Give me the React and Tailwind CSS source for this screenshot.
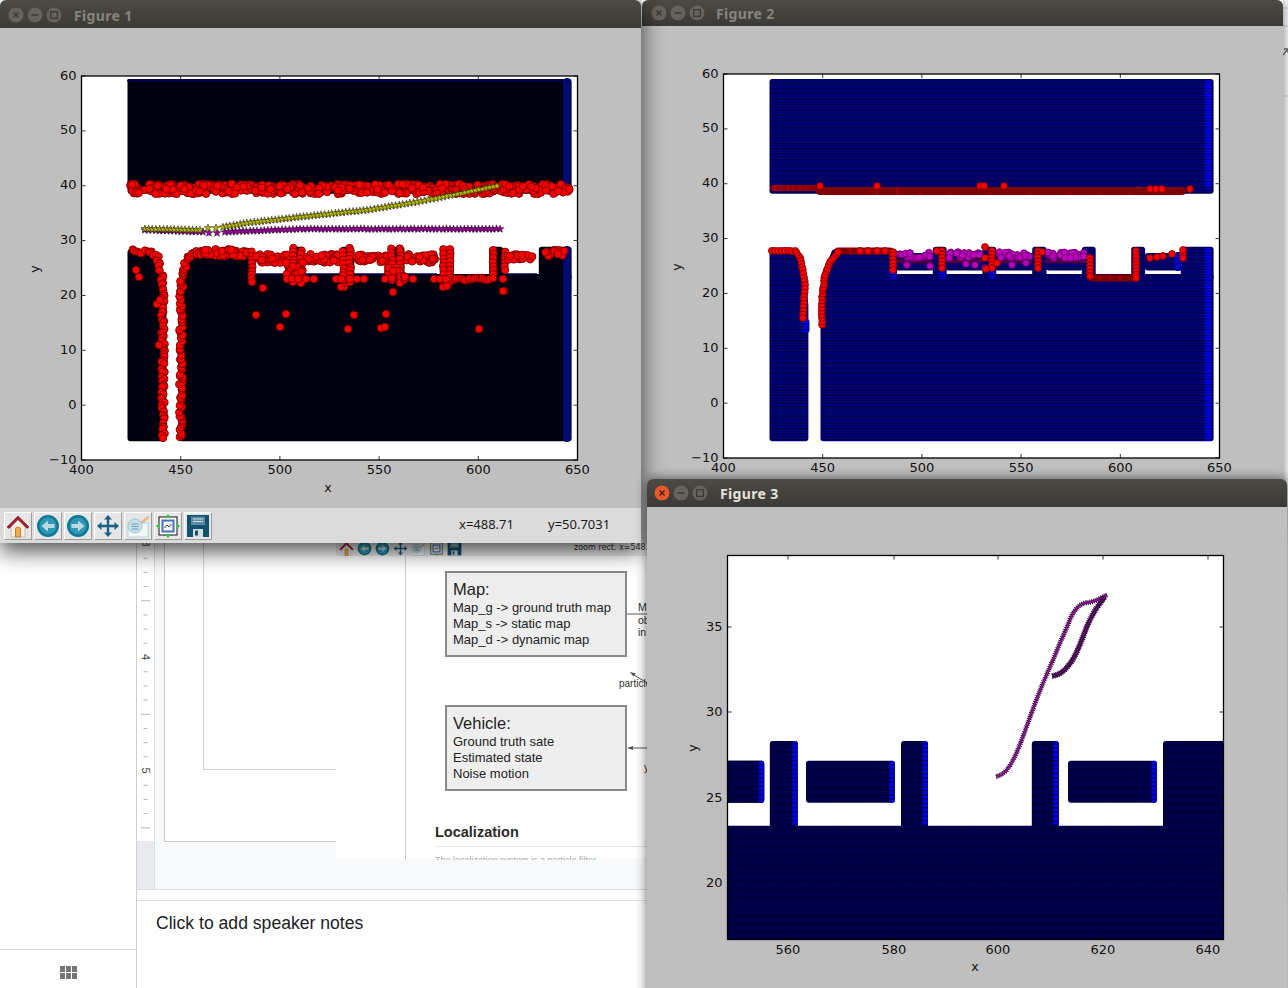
import React from "react";

function makeRng(seed) {
  let a = seed;
  return () => {
    a |= 0; a = (a + 0x6d2b79f5) | 0;
    let t = Math.imul(a ^ (a >>> 15), 1 | a);
    t = (t + Math.imul(t ^ (t >>> 7), 61 | t)) ^ t;
    return ((t ^ (t >>> 14)) >>> 0) / 4294967296;
  };
}

function band(r, x0, x1, y0, y1, n) {
  const o = [];
  for (let i = 0; i < n; i++) o.push([x0 + (x1 - x0) * r(), y0 + (y1 - y0) * r()]);
  return o;
}

function track(r, pts, step, jitter) {
  const o = [];
  for (let i = 0; i < pts.length - 1; i++) {
    const [ax, ay] = pts[i];
    const [bx, by] = pts[i + 1];
    const len = Math.hypot(bx - ax, by - ay);
    const n = Math.max(1, Math.round(len / step));
    for (let k = 0; k < n; k++) {
      o.push([ax + ((bx - ax) * k) / n + (r() - 0.5) * 2 * jitter, ay + ((by - ay) * k) / n + (r() - 0.5) * 2 * jitter]);
    }
  }
  o.push(pts[pts.length - 1]);
  return o;
}

function starPts(cx, cy, R) {
  const p = [];
  for (let i = 0; i < 10; i++) {
    const rad = i % 2 === 0 ? R : R * 0.42;
    const a = -Math.PI / 2 + (i * Math.PI) / 5;
    p.push(`${(cx + rad * Math.cos(a)).toFixed(1)},${(cy + rad * Math.sin(a)).toFixed(1)}`);
  }
  return p.join(" ");
}

function range(a, b, s) {
  const o = [];
  for (let v = a; s > 0 ? v <= b + 1e-6 : v >= b - 1e-6; v += s) o.push(v);
  return o;
}

const poly = (pts) => "M" + pts.map((p) => p[0].toFixed(1) + " " + p[1].toFixed(1)).join("L") + "Z";

function smooth(t) {
  let d = `M${t[0][0]} ${t[0][1]}`;
  for (let i = 1; i < t.length - 1; i++) {
    const mx = (t[i][0] + t[i + 1][0]) / 2;
    const my = (t[i][1] + t[i + 1][1]) / 2;
    d += `Q${t[i][0]} ${t[i][1]} ${mx} ${my}`;
  }
  const l = t[t.length - 1];
  return d + `L${l[0]} ${l[1]}`;
}

function mapShapes(X, Y, withBoxes, maxX) {
  const R = (x0, x1, y0, y1) => poly([[X(x0), Y(y0)], [X(x1), Y(y0)], [X(x1), Y(y1)], [X(x0), Y(y1)]]);
  const conv = (a) => poly(a.map(([x, y]) => [X(x), Y(y)]));
  const s = [
    R(424.7, 645.5, 38.9, 58.7),
    conv([[424.7, -6.2], [424.7, 27.7], [434, 27.7], [437.5, 26], [440, 23], [441.3, 18], [441.3, -6.2]]),
    conv([[450.4, -6.2], [450.4, 18], [451.5, 22], [453, 25], [456, 27.7], [486, 27.7], [486, 23.2], [645.5, 23.2], [645.5, -6.2]]),
    R(507, 511, 23.2, 28.16),
    R(532, 536, 23.2, 28.16),
    R(557.1, 561.3, 23.2, 28.16),
    R(582.1, 586.1, 23.2, 28.16),
    R(607, 611, 23.2, 28.16),
    R(632, maxX, 23.2, 28.16),
  ];
  if (withBoxes) {
    s.push(R(488, 504.5, 24.9, 27), R(513.5, 530, 24.9, 27), R(538, 554.9, 24.9, 27), R(564, 579.8, 24.9, 27), R(613.9, 629.7, 24.9, 27));
  }
  return s;
}

const X1 = (x) => 81.5 + (x - 400) * 1.984;
const Y12 = (y) => 75 + (60 - y) * 5.486;
const X2 = (x) => 723.5 + (x - 400) * 1.984;
const X3 = (x) => 788 + (x - 560) * 5.25;
const Y3 = (y) => 798 + (25 - y) * 17.1;

const r1 = makeRng(11);
const redPlot1 = [
  ...band(r1, 130, 570, 184, 194, 560),
  ...track(r1, [[131, 251], [150, 252], [157, 258], [161, 272], [163, 300], [163, 438]], 2.6, 1.8),
  ...track(r1, [[181, 438], [181, 300], [182, 272], [188, 256], [198, 252], [248, 252]], 2.6, 1.8),
  ...band(r1, 195, 248, 249, 257, 50),
  ...track(r1, [[252, 252], [252, 282]], 4, 0.5),
  ...band(r1, 256, 292, 254, 263, 36),
  ...band(r1, 306, 340, 254, 263, 38),
  ...band(r1, 355, 388, 254, 263, 36),
  ...band(r1, 405, 437, 254, 263, 36),
  ...track(r1, [[293, 248], [293, 282]], 4, 0.8),
  ...track(r1, [[301, 250], [301, 283]], 4, 0.8),
  ...band(r1, 286, 304, 262, 276, 14),
  ...track(r1, [[343, 252], [343, 280]], 4, 0.8),
  ...track(r1, [[350, 248], [350, 282]], 4, 0.8),
  ...track(r1, [[392, 248], [392, 280]], 4, 0.8),
  ...track(r1, [[400, 248], [400, 283]], 4, 0.8),
  ...band(r1, 386, 406, 265, 280, 12),
  ...track(r1, [[444, 250], [444, 279]], 4, 1),
  ...track(r1, [[450, 249], [450, 282]], 4, 0.5),
  ...track(r1, [[452, 279], [490, 279]], 2.2, 1.2),
  ...track(r1, [[493, 250], [493, 278]], 4, 0.5),
  ...track(r1, [[505, 252], [505, 270]], 4, 0.5),
  ...band(r1, 505, 536, 254, 260, 30),
  ...band(r1, 540, 565, 249, 256, 14),
  [287, 279], [292, 279], [298, 279], [306, 279], [314, 279], [336, 279], [341, 279], [350, 279], [357, 279], [364, 279], [385, 279], [392, 278], [413, 279], [434, 279], [440, 279], [446, 279],
  [503, 279], [136, 270], [139, 277], [157, 304], [159, 345], [160, 300],
  [256, 315], [286, 314], [280, 327], [263, 288], [348, 329], [354, 315], [381, 328], [385, 327], [386, 314], [479, 329], [393, 292], [504, 291], [344, 287], [341, 287], [443, 287], [447, 286], [503, 291],
];

const starsYellow = [
  ...track(r1, [[145, 229], [200, 230]], 3.6, 0.2),
  [208, 228], [216, 228],
  ...track(r1, [[223, 227], [247, 223], [300, 217], [367, 210], [417, 202], [447, 196], [497, 186]], 3.6, 0.2),
];
const starsPurple = [
  ...track(r1, [[145, 230], [203, 232]], 3.6, 0.2),
  [209, 233], [217, 233],
  ...track(r1, [[225, 232], [250, 231], [300, 229], [500, 229]], 3.6, 0.2),
];

const r2 = makeRng(29);
const brightPlot2 = [
  [820, 186], [877, 186], [980, 186], [984, 186], [1004, 186], [1190, 189], [1150, 189], [1156, 189], [1162, 189],
  ...track(r2, [[772, 251], [795, 251], [800, 258], [803, 270], [805, 285], [804, 300], [803, 318]], 3.4, 0.3),
  ...track(r2, [[822, 325], [822, 297], [825, 275], [830, 262], [838, 252]], 3.4, 0.4),
  ...track(r2, [[893, 252], [893, 270]], 3.5, 0.1),
  [860, 251], [868, 251], [877, 251], [885, 251],
  ...track(r2, [[942, 251], [942, 268]], 3.5, 0.1), [937, 251],
  ...track(r2, [[992, 251], [992, 268]], 3.5, 0.1), [985, 247], [986, 269], [985, 258], [997, 263],
  ...track(r2, [[1038, 251], [1038, 268]], 3.5, 0.1), [1042, 252],
  ...track(r2, [[1090, 258], [1090, 276]], 3.5, 0.1),
  ...track(r2, [[1136, 251], [1136, 278]], 3.5, 0.1),
  [1150, 258], [1157, 257], [1163, 256], [1172, 254], [1183, 254], [1183, 258], [1183, 250],
];
const magentaPlot2 = [
  ...band(r2, 899, 930, 252, 258, 22),
  ...band(r2, 948, 980, 252, 258, 24),
  ...band(r2, 999, 1030, 252, 258, 24),
  ...band(r2, 1047, 1084, 252, 258, 26),
  [907, 265], [930, 266], [966, 264], [975, 265], [1012, 265], [1026, 263], [985, 268],
];

const traj = [[996, 776.5], [1003, 775], [1012, 763], [1020, 745], [1030, 717], [1040, 690], [1050, 667], [1060, 643], [1067, 627], [1073, 612], [1082, 603], [1093, 602], [1107, 595]];
const traj2 = [[1052, 676], [1060, 675], [1072, 662], [1080, 645], [1088, 623], [1097, 607], [1105, 597]];

function Red({ pts, r = 3.4 }) {
  return (
    <g fill="#ff0000" stroke="#7a0000" strokeWidth="0.9">
      {pts.map((p, i) => (
        <circle key={i} cx={p[0]} cy={p[1]} r={r} />
      ))}
    </g>
  );
}

function Figure({ ox, oy, ax, xticks, yticks, xl, yl, clip, children }) {
  const id = `clip${ox}`;
  return (
    <svg className="block w-full h-full font-['DejaVu_Sans',sans-serif]">
      <g transform={`translate(${-ox} ${-oy})`}>
        <defs>
          <clipPath id={id}>
            <rect x={ax.x} y={ax.y} width={ax.w} height={ax.h} />
          </clipPath>
        </defs>
        <rect x={ax.x} y={ax.y} width={ax.w} height={ax.h} fill="#fff" />
        <g clipPath={clip ? `url(#${id})` : undefined}>{children}</g>
        <rect x={ax.x} y={ax.y} width={ax.w} height={ax.h} fill="none" stroke="#000" strokeWidth="1.3" />
        {xticks.map(([p, l]) => (
          <g key={l}>
            <path d={`M${p} ${ax.y}v4M${p} ${ax.y + ax.h}v-4`} stroke="#000" strokeWidth="0.8" />
            <text x={p} y={ax.y + ax.h + 14} fontSize="13" textAnchor="middle" fill="#111">{l}</text>
          </g>
        ))}
        {yticks.map(([p, l]) => (
          <g key={l}>
            <path d={`M${ax.x} ${p}h4M${ax.x + ax.w} ${p}h-4`} stroke="#000" strokeWidth="0.8" />
            <text x={ax.x - 5} y={p + 3.5} fontSize="13" textAnchor="end" fill="#111">{l}</text>
          </g>
        ))}
        <text x={xl[0]} y={xl[1]} fontSize="12.5" textAnchor="middle" fill="#111">x</text>
        <text x={yl[0]} y={yl[1]} fontSize="12.5" textAnchor="middle" fill="#111" transform={`rotate(-90 ${yl[0]} ${yl[1]})`}>y</text>
      </g>
    </svg>
  );
}

function Lights({ active }) {
  const c = "#64625c";
  const g = "#3a3934";
  return (
    <>
      <svg width="16" height="16" viewBox="0 0 16 16" className="shrink-0">
        <circle cx="8" cy="8" r="7.5" fill={active ? "#e9582a" : c} />
        <path d="M5.5 5.5l5 5M10.5 5.5l-5 5" stroke={active ? "#4a1a08" : g} strokeWidth="1.3" />
      </svg>
      <svg width="16" height="16" viewBox="0 0 16 16" className="shrink-0 ml-[3px]">
        <circle cx="8" cy="8" r="7.5" fill={c} />
        <path d="M4.5 8h7" stroke={g} strokeWidth="1.5" />
      </svg>
      <svg width="16" height="16" viewBox="0 0 16 16" className="shrink-0 ml-[3px]">
        <circle cx="8" cy="8" r="7.5" fill={c} />
        <rect x="4.7" y="4.7" width="6.6" height="6.6" fill="none" stroke={g} strokeWidth="1.3" />
      </svg>
    </>
  );
}

function TitleBar({ title, active, h, pl, tx }) {
  return (
    <div className={`${h} ${pl} flex items-center shrink-0 rounded-t-[6px] bg-gradient-to-b from-[#4c4a44] to-[#3b3a36]`}>
      <Lights active={active} />
      <span className={`${tx} text-[14px] font-bold tracking-[0.35px] font-['Noto_Sans',sans-serif] ${active ? "text-[#e4e2da]" : "text-[#85847d]"}`}>
        {title}
      </span>
    </div>
  );
}

const IconHome = ({ s }) => (
  <svg width={s} height={s} viewBox="0 0 24 24">
    <path d="M5 11v12h14V11L12 5z" fill="#f4efe6" stroke="#a9a396" strokeWidth="0.6" />
    <path d="M9.5 23V14c0-1 5-1 5 0v9z" fill="#eda94a" stroke="#a86a1e" strokeWidth="0.7" />
    <path d="M1 13L12 2l11 11-2 1.5-9-9-9 9z" fill="#a3202c" stroke="#6e1018" strokeWidth="0.6" />
  </svg>
);
const IconBack = ({ s, flip }) => (
  <svg width={s} height={s} viewBox="0 0 24 24">
    <circle cx="12" cy="12" r="11" fill="#0e7895" />
    <circle cx="12" cy="12" r="8.5" fill="#2e97b3" />
    <g transform={flip ? "rotate(180 12 12)" : undefined}>
      <path d="M5.5 12L12 6.5V10h6.5v4H12v3.5z" fill="#bcd9e2" />
    </g>
  </svg>
);
const IconMove = ({ s }) => (
  <svg width={s} height={s} viewBox="0 0 24 24" fill="#1c6284">
    <path d="M12 1l4 4.5h-2.8v5.3h5.3V8l4.5 4-4.5 4v-2.8h-5.3v5.3H16L12 23l-4-4.5h2.8v-5.3H5.5V16L1 12l4.5-4v2.8h5.3V5.5H8z" />
  </svg>
);
const IconEdit = ({ s }) => (
  <svg width={s} height={s} viewBox="0 0 24 24">
    <rect x="2" y="9" width="20" height="14" fill="#f2f7f9" stroke="#b9d2dc" />
    <path d="M13 9l9-7 1 2-8 7z" fill="#e9b77a" />
    <circle cx="9" cy="12" r="7" fill="#c6e0ea" stroke="#9ec4d2" />
    <path d="M5.5 10h7M5.5 12.5h7M5.5 15h7" stroke="#6f9cb0" strokeWidth="1.1" />
  </svg>
);
const IconSub = ({ s }) => (
  <svg width={s} height={s} viewBox="0 0 24 24">
    <rect x="3" y="3" width="18" height="18" fill="#fff" stroke="#111" strokeWidth="1" />
    <rect x="5.5" y="5.5" width="13" height="13" fill="#4c6fb0" />
    <rect x="7.5" y="7.5" width="9" height="9" fill="#f3f5f8" />
    <path d="M8.5 14l2.5-3 2 2 2.5-3" fill="none" stroke="#333" strokeWidth="0.9" />
    <path d="M12 0l3 3.5H9zM12 24l3-3.5H9zM0 12l3.5-3v6zM24 12l-3.5-3v6z" fill="#3fc04a" />
  </svg>
);
const IconSave = ({ s }) => (
  <svg width={s} height={s} viewBox="0 0 24 24">
    <path d="M1 1h22v22H1z" fill="#12526f" />
    <rect x="5" y="2.5" width="14" height="8.5" fill="#5c8aa2" />
    <path d="M7 5h10M7 7.5h10" stroke="#c7d8e0" strokeWidth="1" />
    <rect x="7" y="15" width="10" height="8" fill="#d7dde0" />
    <rect x="9" y="16.5" width="3" height="5" fill="#12526f" />
  </svg>
);

const toolIcons = [
  (s) => <IconHome s={s} />,
  (s) => <IconBack s={s} />,
  (s) => <IconBack s={s} flip />,
  (s) => <IconMove s={s} />,
  (s) => <IconEdit s={s} />,
  (s) => <IconSub s={s} />,
  (s) => <IconSave s={s} />,
];

function Window1() {
  const shapes = mapShapes(X1, Y12, false, 645.5);
  return (
    <div className="absolute left-0 top-0 w-[641px] h-[543px] flex flex-col shadow-[0_8px_22px_rgba(0,0,0,0.7)] rounded-t-[6px] overflow-visible">
      <TitleBar title="Figure 1" h="h-[28px]" pl="pl-[8px] pt-[2px]" tx="ml-[12px]" />
      <div className="h-[480px] bg-[#bfbfbf] shrink-0">
        <Figure
          ox={0}
          oy={28}
          ax={{ x: 81.5, y: 76, w: 496, h: 384 }}
          xticks={range(0, 5, 1).map((i) => [81.5 + i * 99.2, String(400 + i * 50)])}
          yticks={range(0, 7, 1).map((i) => [76 + i * 54.86, i === 7 ? "−10" : String(60 - i * 10)])}
          xl={[328, 492]}
          yl={[39, 269]}
        >
          {shapes.map((d, i) => (
            <path key={i} d={d} fill="#00000f" stroke="#00000f" strokeWidth="6" strokeLinejoin="round" />
          ))}
          <rect x="127" y="79" width="444" height="3" rx="1.5" fill="#00004a" />
          <path d="M567 82V186M567 250V438" stroke="#000a70" strokeWidth="8" strokeLinecap="round" />
          <path d="M250 274H437M503 274H537" stroke="#00004a" strokeWidth="1.5" />
          <Red pts={redPlot1} r={3.7} />
          <g fill="#a000a0" stroke="#111" strokeWidth="0.5">
            {starsPurple.map((p, i) => (
              <polygon key={i} points={starPts(p[0], p[1], 4)} />
            ))}
          </g>
          <g fill="#b8b800" stroke="#111" strokeWidth="0.5">
            {starsYellow.map((p, i) => (
              <polygon key={i} points={starPts(p[0], p[1], 4)} />
            ))}
          </g>
        </Figure>
      </div>
      <div className="h-[35px] bg-[#dbdbdb] flex items-center pl-[4px] gap-[2px] shrink-0 relative">
        {toolIcons.map((fn, i) => (
          <div key={i} className="w-[28px] h-[28px] flex items-center justify-center bg-[#e6e6e6] border border-t-white border-l-white border-r-[#9c9c9c] border-b-[#9c9c9c]">
            {fn(24)}
          </div>
        ))}
        <div className="ml-[245px] w-[87px] pb-[2px] text-[13px] text-[#1c1c1c] font-['Noto_Sans',sans-serif]">x=488.71</div>
        <div className="pb-[2px] text-[13px] text-[#1c1c1c] font-['Noto_Sans',sans-serif]">y=50.7031</div>
      </div>
    </div>
  );
}

function Window2() {
  const shapes = mapShapes(X2, Y12, true, 645.5);
  const cols = [[1208, 83, 186], [1208, 250, 438], [893, 269, 276], [942, 269, 276], [992, 269, 276], [1178, 255, 268], [806, 322, 330]];
  return (
    <div className="absolute left-[642px] top-0 w-[641px] h-[540px] flex flex-col shadow-[0_2px_10px_rgba(0,0,0,0.5)]">
      <TitleBar title="Figure 2" h="h-[26px]" pl="pl-[9px]" tx="ml-[11px]" />
      <div className="flex-1 bg-[#bfbfbf]">
        <Figure
          ox={642}
          oy={26}
          ax={{ x: 723.5, y: 74, w: 496, h: 384 }}
          xticks={range(0, 5, 1).map((i) => [723.5 + i * 99.2, String(400 + i * 50)])}
          yticks={range(0, 7, 1).map((i) => [74 + i * 54.86, i === 7 ? "−10" : String(60 - i * 10)])}
          xl={[970, 490]}
          yl={[681, 267]}
        >
          <defs>
            <pattern id="navyRows" patternUnits="userSpaceOnUse" width="8" height="5.486">
              <rect width="8" height="5.486" fill="#000078" />
              <rect y="0" width="8" height="1" fill="#00003a" />
              <rect y="2.74" width="8" height="0.8" fill="#00004e" />
            </pattern>
            <pattern id="blueRows" patternUnits="userSpaceOnUse" width="8" height="5.486">
              <rect width="8" height="5.486" fill="#0000f4" />
              <rect y="0" width="8" height="1" fill="#00004a" />
              <rect y="2.74" width="8" height="0.8" fill="#00006a" />
            </pattern>
          </defs>
          {shapes.map((d, i) => (
            <path key={i} d={d} fill="url(#navyRows)" stroke="url(#navyRows)" strokeWidth="6" strokeLinejoin="round" />
          ))}
          {cols.map(([x, y0, y1], i) => (
            <rect key={i} x={x - 3.5} y={y0 - 3} width="7" height={y1 - y0 + 6} rx="3" fill="url(#blueRows)" />
          ))}
          <path d="M773 188H817" stroke="#8b0000" strokeWidth="6" strokeLinecap="round" />
          <path d="M820 191H1182" stroke="#7f0000" strokeWidth="8" strokeLinecap="round" />
          <path d="M775 185v6M781 185v6M788 185v6M793 185v6M800 185v6M806 185v6M877 188v7M897 188v7M920 192v3M950 192v3M990 192v3M1030 192v3M1070 192v3M1100 192v3M1130 192v3" stroke="#e00000" strokeWidth="0.8" />
          <path d="M838 251H890M1092 278H1134" stroke="#800000" strokeWidth="7" strokeLinecap="round" />
          <path d="M850 248v6M862 248v6M868 248v6M880 248v6M1100 275v6M1110 275v6M1120 275v6" stroke="#e00000" strokeWidth="0.8" />
          <path d="M899 261H930M948 261H980M999 261H1030M1047 261H1084" stroke="#4a004a" strokeWidth="5" strokeLinecap="round" />
          <g fill="#c000c0" stroke="#6a006a" strokeWidth="0.9">
            {magentaPlot2.map((p, i) => (
              <circle key={i} cx={p[0]} cy={p[1]} r="3.3" />
            ))}
          </g>
          <Red pts={brightPlot2} />
        </Figure>
      </div>
    </div>
  );
}

function Window3() {
  const shapes = mapShapes(X3, Y3, true, 650);
  const extra = [
    poly([[X3(540), Y3(27)], [X3(554.9), Y3(27)], [X3(554.9), Y3(24.9)], [X3(540), Y3(24.9)]]),
    poly([[X3(540), Y3(23.2)], [X3(650), Y3(23.2)], [X3(650), Y3(10)], [X3(540), Y3(10)]]),
  ];
  const cols = [
    [554.9, 27, 24.9, 6],
    [561.3, 28.16, 23.2, 0],
    [579.8, 27, 24.9, 6],
    [586.1, 28.16, 23.2, 0],
    [611, 28.16, 23.2, 0],
    [629.7, 27, 24.9, 6],
  ];
  return (
    <div className="absolute left-[647px] top-[479px] w-[640px] h-[520px] flex flex-col shadow-[0_0_12px_rgba(0,0,0,0.6)] rounded-t-[6px]">
      <TitleBar title="Figure 3" active h="h-[28px]" pl="pl-[7px]" tx="ml-[12px]" />
      <div className="flex-1 bg-[#bfbfbf]">
        <Figure
          ox={647}
          oy={507}
          ax={{ x: 727.5, y: 555.5, w: 496, h: 384 }}
          clip
          xticks={[[788, "560"], [894, "580"], [998, "600"], [1103, "620"], [1208, "640"]]}
          yticks={[[627, "35"], [712, "30"], [798, "25"], [883, "20"]]}
          xl={[975, 971]}
          yl={[697, 748]}
        >
          <defs>
            <pattern id="deepRows" patternUnits="userSpaceOnUse" width="10.5" height="8.55">
              <rect width="10.5" height="8.55" fill="#00004a" />
              <rect width="10.5" height="0.8" fill="#00002c" />
              <rect width="0.6" height="8.55" fill="#00003a" />
            </pattern>
            <pattern id="blue3" patternUnits="userSpaceOnUse" width="6" height="4.27">
              <rect width="6" height="4.27" fill="#0000e8" />
              <rect width="6" height="1.2" fill="#000060" />
            </pattern>
          </defs>
          {[...shapes.slice(3), ...extra].map((d, i) => (
            <path key={i} d={d} fill="url(#deepRows)" stroke="url(#deepRows)" strokeWidth="6" strokeLinejoin="round" />
          ))}
          {cols.map(([x, y1, y0, pad], i) => (
            <rect key={i} x={X3(x) - 2.5} y={Y3(y1) - 3} width="5.5" height={Y3(y0) - Y3(y1) + pad} rx="2.5" fill="url(#blue3)" />
          ))}
          {[traj, traj2].map((t, i) => {
            const d = smooth(t);
            return (
              <g key={i} fill="none" strokeLinejoin="round">
                <path d={d} stroke="#2c0636" strokeWidth={i === 0 ? 5 : 6} strokeDasharray="1 1" />
                <path d={d} stroke="#3a0a45" strokeWidth={i === 0 ? 2.6 : 4.2} />
                <path d={d} stroke="#8f1095" strokeWidth={i === 0 ? 1.6 : 0.6} />
              </g>
            );
          })}
        </Figure>
      </div>
    </div>
  );
}

function Ruler() {
  const ticks = range(-2, 24, 1).map((k) => 543.5 + k * 14.19).filter((y) => y < 842);
  return (
    <div className="w-[18px] shrink-0 flex flex-col border-r border-[#dadce0]">
      <div className="h-[841px] bg-white">
        <svg className="block w-full h-full font-['Liberation_Sans',sans-serif]">
          {ticks.map((y, i) => {
            const k = i - 2;
            if (k % 8 === 0) return null;
            const long = k % 4 === 0;
            return <rect key={i} x={long ? 4 : 6.5} y={y} width={long ? 9 : 4} height="1" fill="#b5b5b5" />;
          })}
          {[["3", 543.5], ["4", 657], ["5", 770.5]].map(([t, y]) => (
            <text key={t} x="9" y={y} fontSize="11" fill="#444" textAnchor="middle" dominantBaseline="central" transform={`rotate(90 9 ${y})`}>
              {t}
            </text>
          ))}
        </svg>
      </div>
      <div className="flex-1 bg-[#e8eaed]" />
    </div>
  );
}

function DocBox({ title, lines, cls }) {
  return (
    <div className={`w-[182px] h-[86px] border-2 border-[#8a8a8a] bg-[#eeeeee] pl-[6px] pt-[6px] text-[#222] ${cls}`}>
      <div className="text-[16.5px] leading-[20px]">{title}</div>
      <div className="text-[13px] leading-[16px] mt-[1px]">
        {lines.map((l) => (
          <div key={l} className="whitespace-nowrap">{l}</div>
        ))}
      </div>
    </div>
  );
}

function DocPicture() {
  return (
    <div className="absolute left-[199px] top-[540px] w-[311px] h-[319px] bg-white flex flex-col font-['Liberation_Sans',sans-serif]">
      <div className="h-[16px] bg-[#ececec] flex items-center pl-[2px] gap-[2px] shrink-0 relative">
        {toolIcons.map((fn, i) => (
          <div key={i} className="w-[16px] h-[16px] flex items-center justify-center">{fn(15)}</div>
        ))}
        <span className="absolute left-[238px] top-[2px] text-[8px] whitespace-nowrap text-[#333] font-['DejaVu_Sans',sans-serif]">zoom rect. x=548.6</span>
      </div>
      <div className="flex-1 flex relative">
        <div className="w-[70px] border-r border-[#cfcfcf] shrink-0" />
        <div className="flex flex-col pt-[15px]">
          <DocBox cls="ml-[39px]" title="Map:" lines={["Map_g -> ground truth map", "Map_s -> static map", "Map_d -> dynamic map"]} />
          <DocBox cls="ml-[39px] mt-[48px]" title="Vehicle:" lines={["Ground truth sate", "Estimated state", "Noise motion"]} />
          <div className="ml-[29px] mt-[31px] w-[260px] text-[14.5px] leading-[20px] font-bold text-[#2b2b2b] pb-[4px] border-b border-[#e6e6e6]">Localization</div>
          <div className="ml-[29px] mt-[8px] h-[5px] overflow-hidden text-[9px] leading-[10px] text-[#aaa] whitespace-nowrap">The localization system is a particle filter</div>
        </div>
        <svg className="absolute left-0 top-0 w-full h-full" fill="none">
          <path d="M291 58H311" stroke="#777" strokeWidth="1.2" />
          <path d="M311 127L295 117" stroke="#555" />
          <path d="M294 116l6 1.5-2.5 3z" fill="#555" />
          <path d="M293 192H311" stroke="#777" strokeWidth="1.2" />
          <path d="M291 192l6-2v4z" fill="#555" />
        </svg>
        <div className="absolute left-[302px] top-[45px] text-[10.5px] leading-[12.5px] text-[#333]">
          <div>M</div>
          <div>ob</div>
          <div>in</div>
        </div>
        <div className="absolute left-[283px] top-[120px] text-[10px] text-[#333] whitespace-nowrap">particle</div>
        <div className="absolute left-[308px] top-[204px] text-[10px] text-[#333]">y</div>
      </div>
    </div>
  );
}

function Background() {
  return (
    <div className="absolute inset-0 flex bg-white font-['Liberation_Sans',sans-serif]">
      <div className="w-[137px] shrink-0 border-r border-[#cfcfcf] flex flex-col justify-end">
        <div className="h-[39px] border-t border-[#d6d6d6] flex items-center justify-center pt-[6px]">
          <div className="grid grid-cols-3 gap-[1px] w-[17px]">
            {range(0, 5, 1).map((i) => (
              <div key={i} className="h-[6px] bg-[#757575]" />
            ))}
          </div>
        </div>
      </div>
      <div className="flex-1 flex flex-col relative">
        <div className="h-[890px] flex border-b border-[#dadce0] bg-[#f8f9fa] shrink-0">
          <Ruler />
          <div className="flex-1 pl-[9px]">
            <div className="h-[842px] w-[1040px] bg-white border-l border-b border-[#c8c8c8] pl-[38px]">
              <div className="h-[770px] border-l border-b border-[#d0d0d0]" />
            </div>
          </div>
        </div>
        <div className="h-[10px] shrink-0" />
        <div className="flex-1 border-t border-[#e0e0e0] pl-[19px] pt-[11px] text-[17.6px] leading-[22px] text-[#202124]">
          Click to add speaker notes
        </div>
        <DocPicture />
      </div>
      <svg className="absolute left-[1283px] top-0 w-[5px] h-[545px]">
        <path d="M0 8H5M0 26H5M0 96H5" stroke="#cfcfcf" />
        <path d="M0 55L4 50M1 49h4v4" stroke="#666" strokeWidth="1.3" fill="none" />
      </svg>
    </div>
  );
}

export default function App() {
  return (
    <div className="relative w-[1288px] h-[988px] overflow-hidden bg-white">
      <Background />
      <Window2 />
      <Window1 />
      <Window3 />
    </div>
  );
}
